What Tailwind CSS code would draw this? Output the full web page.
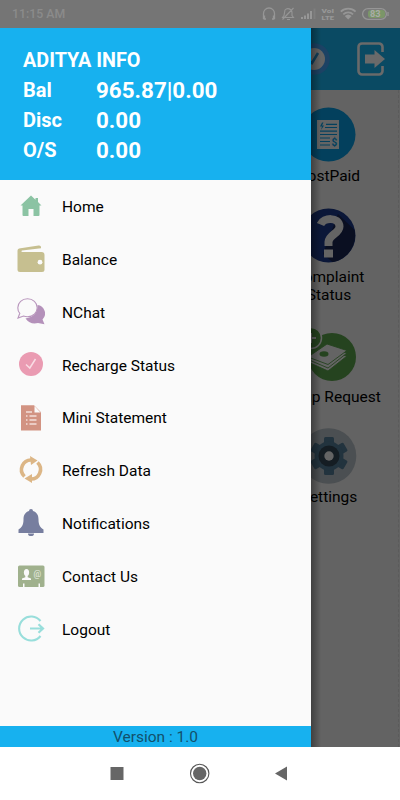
<!DOCTYPE html>
<html lang="en">
<head>
  <meta charset="UTF-8" />
  <meta name="viewport" content="width=device-width, initial-scale=1.0"/>
  <title>Aditya Info</title>
  <script src="https://cdn.jsdelivr.net/npm/@tailwindcss/browser@4"></script>
</head>
<body class="w-[400px] h-[800px] overflow-hidden bg-white font-['Roboto',sans-serif] flex flex-col">

  <!-- status bar -->
  <div class="h-[27.500px] shrink-0 bg-[#757575] flex items-center justify-between pl-3 pr-[11px] text-[#8b8b8b]">
    <span class="text-[12.3px] font-medium">11:15 AM</span>
    <svg class="w-[128px] h-7" viewBox="261 0 128 28" fill="none" stroke="#969696" stroke-width="1.3">
      <path d="M264.500 18.500h-1v-5a5.500 5.500 0 0 1 11 0v5h-1M264.500 15.500v3.500h1.500M273.500 15.500v3.500h-1.500"/>
      <path d="M282.500 17.500h11l-1.500-2v-3a4 4 0 0 0-7-2.500l-1 5.500zM287 19.500h3M293.500 8l-11 11.500" stroke-width="1.100"/>
      <g stroke="none">
        <path fill="#979797" d="M301 17h2v2h-2zM304 15.500h2v3.500h-2zM307 13.500h2v5.500h-2z"/>
        <path fill="#979797" d="M310 11h2v8h-2z"/>
        <path fill="#7f7f7f" d="M313.500 8.500h2v10.500h-2z"/>
        <text x="321.500" y="12.700" fill="#979797" font-size="5.500" font-weight="900" textLength="12.500" lengthAdjust="spacingAndGlyphs">VoI</text>
        <text x="321.500" y="19.500" fill="#979797" font-size="5.800" font-weight="900" textLength="12.500" lengthAdjust="spacingAndGlyphs">LTE</text>
      </g>
      <path stroke-width="1.800" d="M340.800 11.700a10.500 10.500 0 0 1 14.800 0M343.300 14.300a7 7 0 0 1 9.800 0"/>
      <path stroke="none" fill="#979797" d="M344.800 16a5 5 0 0 1 6.800 0l-3.400 3.600z"/>
      <rect x="362.600" y="8.600" width="23.800" height="10.800" rx="5.400"/>
      <path d="M388 12v4"/>
      <rect x="368" y="10" width="17" height="8" rx="3" fill="#7b9668" stroke="none"/>
      <text x="370" y="17" fill="#a9aca7" stroke="none" font-size="9.200" font-weight="700">83</text>
    </svg>
  </div>

  <div class="relative h-[719px] shrink-0 overflow-hidden bg-[#636363]">

    <!-- dimmed home screen -->
    <div class="h-[62px] bg-[#0a4a63] flex items-center justify-end gap-[24px] pr-[13px]">
      <svg class="w-[34px] h-[34px]" viewBox="0 0 34 34">
        <circle cx="17" cy="17" r="15.800" fill="#1c4264"/>
        <circle cx="17" cy="17" r="11" fill="#646464"/>
        <path d="M9 16l6 5 6-10" fill="none" stroke="#123f5a" stroke-width="2.500"/>
      </svg>
      <svg class="w-[32px] h-[36px]" viewBox="0 0 32 36">
        <path d="M27.500 11V6a3.500 3.500 0 0 0-3.500-3.500H7A3.500 3.500 0 0 0 3.500 6v24A3.500 3.500 0 0 0 7 33.500h17a3.500 3.500 0 0 0 3.500-3.500v-5" fill="none" stroke="#6a6a6a" stroke-width="2.600"/>
        <path d="M10 13.500h9.500V9L30 18l-10.500 9v-4.500H10z" fill="#6a6a6a"/>
      </svg>
    </div>
    <div class="ml-[260.500px] w-[138px] h-[657px] border-r border-dashed border-[#5b5b5b] pt-[17px] flex flex-col items-center text-[15.5px] leading-[18.5px] text-black text-center">
      <svg class="w-14 h-14" viewBox="0 0 56 56">
        <circle cx="27.500" cy="27.500" r="27" fill="#03405d"/>
        <path fill="#646464" d="M16 13h22v29H16z"/>
        <path d="M25 17.300h11M24 20.500h12M19 24.200h17M19 27.500h17M19 31h10M19 34.500h10M19 38h10" stroke="#03405d" stroke-width="1.200"/>
        <path d="M21 15.500l-2 4h2l-1 3.500 3-4.500h-2l1.500-3z" fill="#03405d"/>
        <text x="30.500" y="38.500" font-size="10" font-weight="700" fill="#03405d">$</text>
      </svg>
      <span class="mt-[4px]">PostPaid</span>

      <svg class="mt-[22.500px] w-14 h-14" viewBox="0 0 56 56">
        <circle cx="27.500" cy="27.500" r="27" fill="#0b1738"/>
        <path d="M37 6l16.500 16a27 27 0 0 1-22 32L22 46z" fill="#0a0f21"/>
        <path d="M19.500 16.500c3-7 18.500-8 19 2 0 7-10.500 8-11 15.500V38" fill="none" stroke="#646464" stroke-width="8"/>
        <path fill="#646464" d="M23 41.500h9v8h-9z"/>
      </svg>
      <span class="mt-[4px] w-[90px]">Complaint Status</span>

      <svg class="mt-[23.500px] w-[60px] h-[56px]" viewBox="0 0 60 56">
        <circle cx="33" cy="29" r="24" fill="#25431f"/>
        <g fill="#646464" stroke="#25431f" stroke-width=".9">
          <path d="M9 34l19-10 20 4-19 15z"/>
          <path d="M9 31.500l19-10 20 3.500-19 15z"/>
          <path d="M9 29l19-13 20 6.500-19 14z"/>
        </g>
        <ellipse cx="25" cy="26" rx="4.500" ry="2.700" fill="#25431f"/>
        <circle cx="12" cy="10" r="10.500" fill="#25431f" stroke="#646464" stroke-width="1.500"/>
        <path d="M12 5v10M7 10h10" stroke="#646464" stroke-width="2"/>
      </svg>
      <span class="mt-[3.500px]">Topup Request</span>

      <svg class="mt-[21.500px] w-14 h-14" viewBox="0 0 56 56">
        <circle cx="27.500" cy="28" r="27.800" fill="#4b4f52"/>
        <g fill="#22333e">
          <rect x="23" y="9" width="10" height="38" rx="1.500"/>
          <rect x="23" y="9" width="10" height="38" rx="1.500" transform="rotate(60 28 28)"/>
          <rect x="23" y="9" width="10" height="38" rx="1.500" transform="rotate(120 28 28)"/>
          <circle cx="28" cy="28" r="14.500"/>
        </g>
        <circle cx="28" cy="28" r="10.500" fill="#151d23"/>
        <circle cx="28" cy="28" r="4.700" fill="#646464"/>
      </svg>
      <span class="mt-[4.500px]">Settings</span>
    </div>

    <!-- drawer shadow -->
    <div class="absolute left-[311px] top-0 w-[10px] h-full bg-linear-to-r from-black/35 to-transparent"></div>

    <!-- drawer -->
    <div class="absolute left-0 top-0 w-[311px] h-full bg-[#fafafa] flex flex-col">
      <div class="h-[152.500px] shrink-0 bg-[#17b1ef] text-white font-bold pl-[23px] pt-[18.500px]">
        <div class="h-[29px] leading-[29px] text-[19.8px]">ADITYA INFO</div>
        <div class="flex h-[30px] leading-[30px]"><span class="w-[73px] text-[20px]">Bal</span><span class="text-[22.400px]">965.87|0.00</span></div>
        <div class="flex h-[30px] leading-[30px]"><span class="w-[73px] text-[20px]">Disc</span><span class="text-[22.400px]">0.00</span></div>
        <div class="flex h-[30px] leading-[30px]"><span class="w-[73px] text-[20px]">O/S</span><span class="text-[22.400px]">0.00</span></div>
      </div>

      <ul class="grow text-[15.500px] text-black [&>li]:flex [&>li]:items-center [&>li]:gap-[17px] [&>li]:h-[52.800px] [&>li]:pl-[17px] [&_svg]:w-7 [&_svg]:h-7 [&_span]:pt-[3px]">
        <li>
          <svg viewBox="0 0 28 28" fill="#8bc3a3"><path d="M14 3.500L3.500 13.500h2V23a1 1 0 0 0 1 1h5v-7h5v7h5a1 1 0 0 0 1-1v-9.500h2L21 10V6h-2.500v1.700z"/></svg>
          <span>Home</span>
        </li>
        <li>
          <svg viewBox="0 0 28 28" fill="#c6bf90"><path d="M3.500 3.300L21.500 .600q2.500-.300 2.500 1.500v1.200L5 5.500q-1.500 1 .5 1.500H24.500a3 3 0 0 1 3 3v14.500a2.500 2.500 0 0 1-2.500 2.500H3a2.500 2.500 0 0 1-2.500-2.500V6.500a3 3 0 0 1 3-3.200z"/><circle cx="23" cy="17.200" r="2.400" fill="#fafafa"/></svg>
          <span>Balance</span>
        </li>
        <li>
          <svg viewBox="0 0 28 28"><path d="M20.500 7a8.500 8.500 0 0 1 5 14.500l2 4.700-6.500-1.200a12 12 0 0 1-12.500-4.500q12-2 12-13.500z" fill="#b491ba"/><path d="M10.500 .800c5.500 0 9.700 3.800 9.700 8.900s-4.200 9-9.700 9q-2.200 0-4-.7L1 20l1.800-4.700A8.200 8.200 0 0 1 .8 9.700c0-5.100 4.200-8.900 9.700-8.900z" fill="#fafafa" stroke="#b996bd" stroke-width="1.100"/></svg>
          <span>NChat</span>
        </li>
        <li>
          <svg viewBox="0 0 28 28"><circle cx="14" cy="13" r="12" fill="#ea9bb2"/><path d="M9 13.500l3.800 3.500L18.500 8" fill="none" stroke="#f9dce4" stroke-width="1.500"/></svg>
          <span>Recharge Status</span>
        </li>
        <li>
          <svg viewBox="0 0 28 28"><path d="M4 1.200h13l7 7V26.500H4z" fill="#d29382"/><path d="M17.500 2v6.500h6z" fill="#fafafa"/><path d="M9 8h6M12.500 12h7M12.500 16h7M12.500 20h7M9 12h1.500M9 16h1.500M9 20h1.500" stroke="#f3dfda" stroke-width="1.300"/></svg>
          <span>Mini Statement</span>
        </li>
        <li>
          <svg viewBox="0 0 28 28"><g fill="none" stroke="#dcb686" stroke-width="3.600"><path d="M7.500 20.500A9.600 9.600 0 0 1 15 4"/><path d="M20.500 6.500A9.600 9.600 0 0 1 13 23"/></g><path d="M13 0l7.500 4.500L14 9zM15 18l-7.500 4.500L15 27z" fill="#dcb686"/></svg>
          <span>Refresh Data</span>
        </li>
        <li>
          <svg viewBox="0 0 28 28" fill="#777e9f"><path d="M12 2a2 2 0 0 1 4 0c4 1.500 5.500 4 5.500 8.500 0 6 2 8 5 10V24H1.500v-3.500c3-2 5-4 5-10C6.500 6 8 3.500 12 2z"/><path d="M11 24.500h6a3 2.600 0 0 1-6 0z"/></svg>
          <span>Notifications</span>
        </li>
        <li>
          <svg viewBox="0 0 28 28"><rect x="1" y="3.500" width="26.500" height="21.500" rx="1.500" fill="#a0b18d"/><ellipse cx="9.500" cy="10.500" rx="2.600" ry="3.500" fill="#fafafa"/><path d="M8.300 12h2.400v3.300l3.300 1.200v1.500H5v-1.500l3.300-1.200zM6 21.500h1.500V25H6zM21.500 21.500H23V25h-1.500z" fill="#fafafa"/><text x="16.500" y="15" font-size="8.500" fill="#e8ede2">@</text></svg>
          <span>Contact Us</span>
        </li>
        <li>
          <svg viewBox="0 0 28 28" fill="none" stroke="#98dedb" stroke-width="2.100"><path d="M23.500 6A12 12 0 1 0 23.500 21"/><path d="M13 13.500h13M21.500 9.300l4.500 4.200-4.500 4.200" stroke-width="2.200"/></svg>
          <span>Logout</span>
        </li>
      </ul>

      <div class="h-[21px] shrink-0 bg-[#17b1ef] text-[#12506b] text-[15.500px] leading-[22px] text-center">Version : 1.0</div>
    </div>
  </div>

  <!-- android navigation -->
  <div class="grow bg-white">
    <svg class="w-[400px] h-[53px]" viewBox="0 747 400 53" fill="#666">
      <path d="M110.500 767h13v13h-13z"/>
      <circle cx="199.700" cy="773.500" r="6.700"/>
      <circle cx="199.700" cy="773.500" r="9.200" fill="none" stroke="#555" stroke-width="1.100"/>
      <path d="M275 773.500l12-7v14z"/>
    </svg>
  </div>
</body>
</html>
